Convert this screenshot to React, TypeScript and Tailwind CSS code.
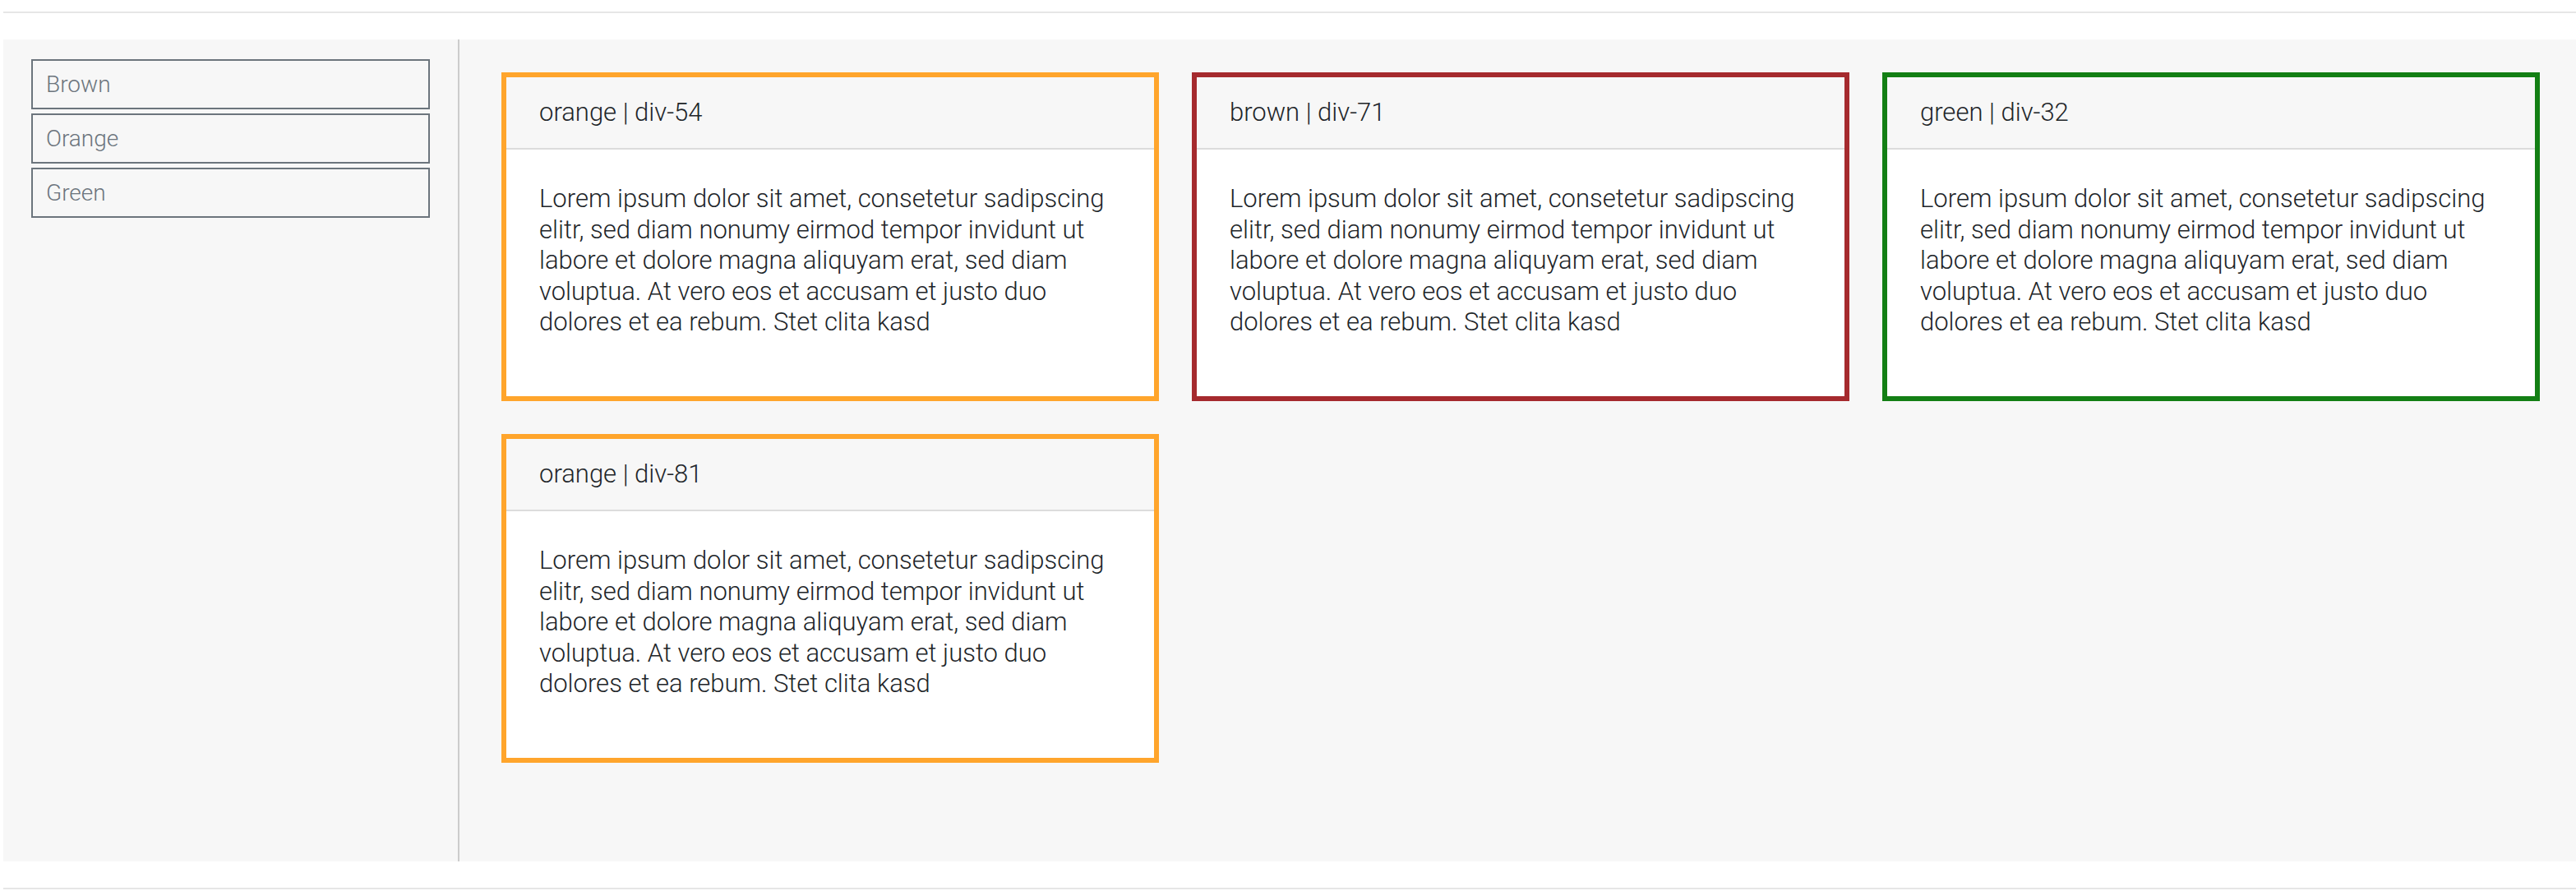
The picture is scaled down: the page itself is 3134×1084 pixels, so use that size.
const LOREM =
  "Lorem ipsum dolor sit amet, consetetur sadipscing elitr, sed diam nonumy eirmod tempor invidunt ut labore et dolore magna aliquyam erat, sed diam voluptua. At vero eos et accusam et justo duo dolores et ea rebum. Stet clita kasd";

type Card = {
  id: string;
  color: "orange" | "brown" | "green";
};

const cards: Card[] = [
  { id: "div-54", color: "orange" },
  { id: "div-71", color: "brown" },
  { id: "div-32", color: "green" },
  { id: "div-81", color: "orange" },
];

const borderByColor: Record<Card["color"], string> = {
  orange: "border-[#ffa52c]",
  brown: "border-[#a52a2e]",
  green: "border-[#137f14]",
};

const filters = ["Brown", "Orange", "Green"];

function FilterButton({ label }: { label: string }) {
  return (
    <button
      type="button"
      className="flex h-[61px] w-full items-center border-2 border-[#6c757d] bg-transparent px-4 text-left text-[28px] font-light text-[#6c757d]"
    >
      {label}
    </button>
  );
}

function ColorCard({ card }: { card: Card }) {
  return (
    <div
      className={`flex h-[400px] w-[800px] flex-col border-[6px] bg-white ${borderByColor[card.color]}`}
    >
      <div className="border-b-2 border-[#dcdcdc] bg-[#f7f7f7] px-10 py-6 leading-[38px]">
        {card.color} | {card.id}
      </div>

      <div className="px-10 pt-[41px] pb-10 leading-[37.5px]">
        <p>{LOREM}</p>
      </div>
    </div>
  );
}

export default function App() {
  return (
    <div
      className="min-h-screen bg-white pl-[4px] text-[31px] font-light text-[#212529]"
      style={{ fontFamily: "'Roboto Light', Roboto, 'Liberation Sans', sans-serif" }}
    >
      <div className="mt-[14px] h-[2px] bg-[#e6e6e6]" />

      <div className="mt-[32px] flex h-[1000px] bg-[#f7f7f7]">
        <aside className="flex w-[555px] shrink-0 flex-col gap-[5px] border-r-2 border-[#cccccc] px-[34px] pt-[24px]">
          {filters.map((label) => (
            <FilterButton key={label} label={label} />
          ))}
        </aside>

        <main className="flex flex-1 flex-wrap content-start gap-[40px] pl-[51px] pt-[40px]">
          {cards.map((card) => (
            <ColorCard key={card.id} card={card} />
          ))}
        </main>
      </div>

      <div className="mt-[32px] h-[2px] bg-[#e6e6e6]" />
    </div>
  );
}
